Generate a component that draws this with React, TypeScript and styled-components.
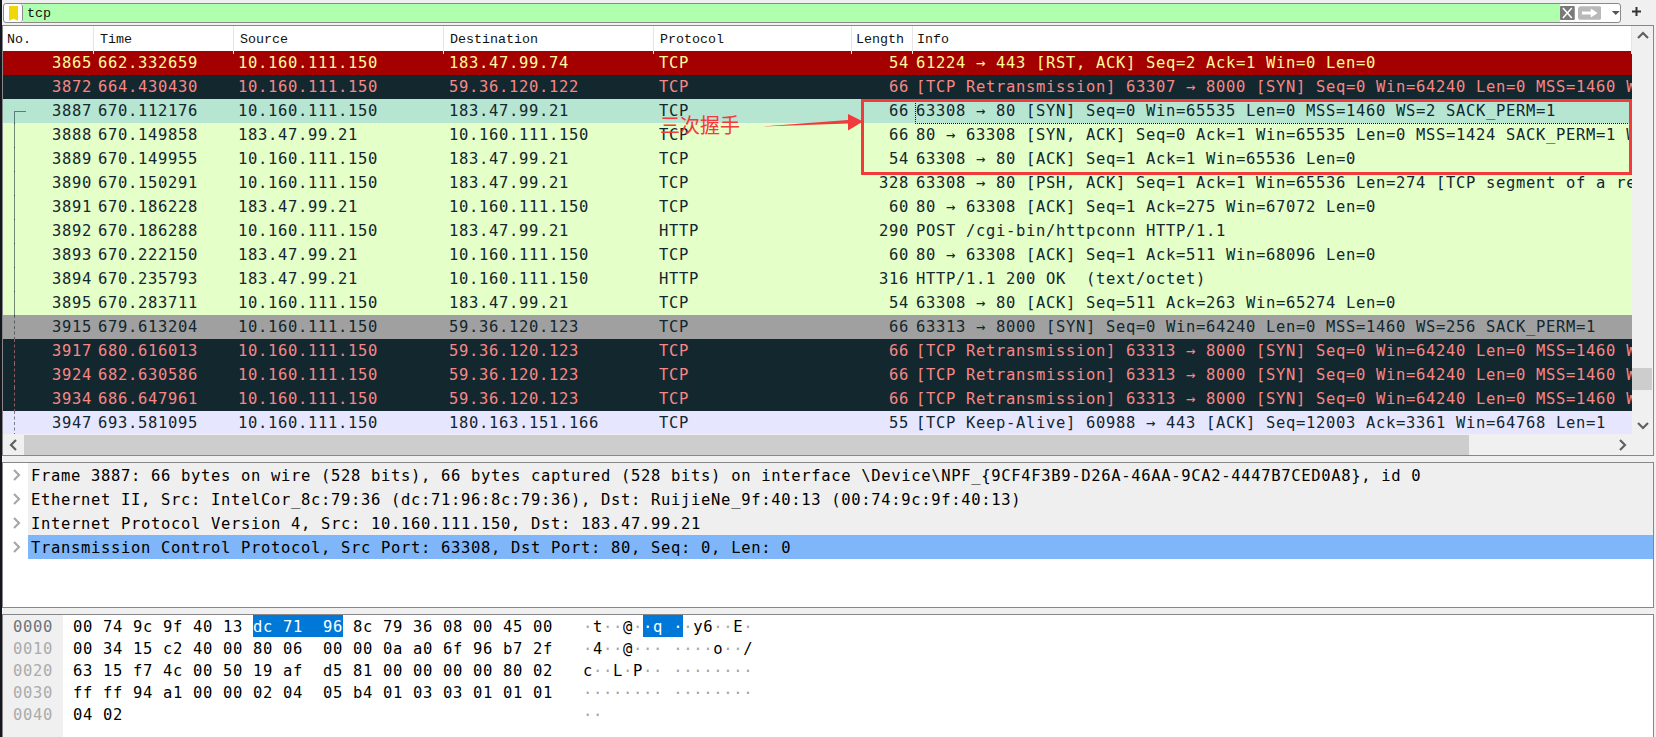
import React from 'react'
import styled, { createGlobalStyle } from 'styled-components'

type RowKind = 'rst' | 'bad' | 'current' | 'http' | 'syn' | 'tcp'
type Related = 'start' | 'solid' | 'dashed'

interface Packet {
  no: number
  time: string
  source: string
  destination: string
  protocol: string
  length: number
  info: string
  kind: RowKind
  related?: Related
}

const LOCAL = '10.160.111.150'
const SERVER = '183.47.99.21'
const RETRANS = '[TCP Retransmission] 63313 → 8000 [SYN] Seq=0 Win=64240 Len=0 MSS=1460 WS=256 SACK_PERM=1'

const packets: Packet[] = [
  { no: 3865, time: '662.332659', source: LOCAL, destination: '183.47.99.74', protocol: 'TCP', length: 54, info: '61224 → 443 [RST, ACK] Seq=2 Ack=1 Win=0 Len=0', kind: 'rst' },
  { no: 3872, time: '664.430430', source: LOCAL, destination: '59.36.120.122', protocol: 'TCP', length: 66, info: '[TCP Retransmission] 63307 → 8000 [SYN] Seq=0 Win=64240 Len=0 MSS=1460 WS=256 SACK_PERM=1', kind: 'bad' },
  { no: 3887, time: '670.112176', source: LOCAL, destination: SERVER, protocol: 'TCP', length: 66, info: '63308 → 80 [SYN] Seq=0 Win=65535 Len=0 MSS=1460 WS=2 SACK_PERM=1', kind: 'current', related: 'start' },
  { no: 3888, time: '670.149858', source: SERVER, destination: LOCAL, protocol: 'TCP', length: 66, info: '80 → 63308 [SYN, ACK] Seq=0 Ack=1 Win=65535 Len=0 MSS=1424 SACK_PERM=1 WS=512', kind: 'http', related: 'solid' },
  { no: 3889, time: '670.149955', source: LOCAL, destination: SERVER, protocol: 'TCP', length: 54, info: '63308 → 80 [ACK] Seq=1 Ack=1 Win=65536 Len=0', kind: 'http', related: 'solid' },
  { no: 3890, time: '670.150291', source: LOCAL, destination: SERVER, protocol: 'TCP', length: 328, info: '63308 → 80 [PSH, ACK] Seq=1 Ack=1 Win=65536 Len=274 [TCP segment of a reassembled PDU]', kind: 'http', related: 'solid' },
  { no: 3891, time: '670.186228', source: SERVER, destination: LOCAL, protocol: 'TCP', length: 60, info: '80 → 63308 [ACK] Seq=1 Ack=275 Win=67072 Len=0', kind: 'http', related: 'solid' },
  { no: 3892, time: '670.186288', source: LOCAL, destination: SERVER, protocol: 'HTTP', length: 290, info: 'POST /cgi-bin/httpconn HTTP/1.1', kind: 'http', related: 'solid' },
  { no: 3893, time: '670.222150', source: SERVER, destination: LOCAL, protocol: 'TCP', length: 60, info: '80 → 63308 [ACK] Seq=1 Ack=511 Win=68096 Len=0', kind: 'http', related: 'solid' },
  { no: 3894, time: '670.235793', source: SERVER, destination: LOCAL, protocol: 'HTTP', length: 316, info: 'HTTP/1.1 200 OK  (text/octet)', kind: 'http', related: 'solid' },
  { no: 3895, time: '670.283711', source: LOCAL, destination: SERVER, protocol: 'TCP', length: 54, info: '63308 → 80 [ACK] Seq=511 Ack=263 Win=65274 Len=0', kind: 'http', related: 'solid' },
  { no: 3915, time: '679.613204', source: LOCAL, destination: '59.36.120.123', protocol: 'TCP', length: 66, info: '63313 → 8000 [SYN] Seq=0 Win=64240 Len=0 MSS=1460 WS=256 SACK_PERM=1', kind: 'syn', related: 'dashed' },
  { no: 3917, time: '680.616013', source: LOCAL, destination: '59.36.120.123', protocol: 'TCP', length: 66, info: RETRANS, kind: 'bad', related: 'dashed' },
  { no: 3924, time: '682.630586', source: LOCAL, destination: '59.36.120.123', protocol: 'TCP', length: 66, info: RETRANS, kind: 'bad', related: 'dashed' },
  { no: 3934, time: '686.647961', source: LOCAL, destination: '59.36.120.123', protocol: 'TCP', length: 66, info: RETRANS, kind: 'bad', related: 'dashed' },
  { no: 3947, time: '693.581095', source: LOCAL, destination: '180.163.151.166', protocol: 'TCP', length: 55, info: '[TCP Keep-Alive] 60988 → 443 [ACK] Seq=12003 Ack=3361 Win=64768 Len=1', kind: 'tcp', related: 'dashed' }
]

const details = [
  'Frame 3887: 66 bytes on wire (528 bits), 66 bytes captured (528 bits) on interface \\Device\\NPF_{9CF4F3B9-D26A-46AA-9CA2-4447B7CED0A8}, id 0',
  'Ethernet II, Src: IntelCor_8c:79:36 (dc:71:96:8c:79:36), Dst: RuijieNe_9f:40:13 (00:74:9c:9f:40:13)',
  'Internet Protocol Version 4, Src: 10.160.111.150, Dst: 183.47.99.21',
  'Transmission Control Protocol, Src Port: 63308, Dst Port: 80, Seq: 0, Len: 0'
]

const hexRows = [
  { offset: '0000', hex: '00 74 9c 9f 40 13 dc 71  96 8c 79 36 08 00 45 00', ascii: '·t··@··q ··y6··E·' },
  { offset: '0010', hex: '00 34 15 c2 40 00 80 06  00 00 0a a0 6f 96 b7 2f', ascii: '·4··@··· ····o··/' },
  { offset: '0020', hex: '63 15 f7 4c 00 50 19 af  d5 81 00 00 00 00 80 02', ascii: 'c··L·P·· ········' },
  { offset: '0030', hex: 'ff ff 94 a1 00 00 02 04  05 b4 01 03 03 01 01 01', ascii: '········ ········' },
  { offset: '0040', hex: '04 02', ascii: '··' }
]

const rowColors: Record<RowKind, { bg: string; fg: string }> = {
  rst: { bg: '#a40000', fg: '#fffc9c' },
  bad: { bg: '#12272e', fg: '#f78787' },
  current: { bg: '#b6e5d1', fg: '#12272e' },
  http: { bg: '#e4ffc7', fg: '#12272e' },
  syn: { bg: '#a0a0a0', fg: '#12272e' },
  tcp: { bg: '#e7e6ff', fg: '#12272e' }
}

const COLUMNS = '91px 140px 210px 210px 198px 61px 719px'

const GlobalStyle = createGlobalStyle`
  html, body {
    margin: 0;
    background: #f0f0f0;
    overflow: hidden;
  }
`

const Shell = styled.div`
  position: relative;
  width: 1654px;
  height: 737px;
  display: flex;
  flex-direction: column;
  border-left: 2px solid #14181c;
  box-sizing: border-box;
  overflow: hidden;
  font-family: "DejaVu Sans Mono", monospace;
  font-size: 15.5px;
  letter-spacing: 0.67px;
`

const FilterBar = styled.div`
  height: 25px;
  display: flex;
  align-items: flex-start;
  padding: 3px 0 0 1px;
  box-sizing: border-box;
`

const FilterField = styled.div`
  width: 1618px;
  height: 20px;
  display: flex;
  border: 1px solid #8a8a8a;
  border-radius: 3px;
  box-sizing: border-box;
  overflow: hidden;
  background: #fff;
`

const BookmarkBox = styled.div`
  width: 18px;
  display: flex;
  align-items: center;
  justify-content: center;
  border-right: 1px solid #8a8a8a;
  border-radius: 0 3px 3px 0;
`

const FilterText = styled.div`
  flex: 1;
  padding-left: 4px;
  background: #afffaf;
  font-family: "Liberation Mono", monospace;
  font-size: 13.33px;
  letter-spacing: 0;
  line-height: 20px;
  color: #111;
`

const FilterButtons = styled.div`
  width: 60px;
  display: flex;
  align-items: center;
  gap: 3px;
`

const AddButton = styled.div`
  width: 30px;
  display: flex;
  justify-content: center;
  padding-top: 3px;
`

const Pane = styled.section<{ $height: number }>`
  height: ${p => p.$height}px;
  flex: none;
  border: 1px solid #86868b;
  box-sizing: border-box;
  background: #fff;
  overflow: hidden;
`

const PacketPane = styled(Pane)`
  display: grid;
  grid-template-columns: 1629px 21px;
  grid-template-rows: 408px 21px;
  background: #f0f0f0;
  margin-bottom: 6px;
`

const PacketList = styled.div`
  overflow: hidden;
  background: #fff;
`

const HeaderRow = styled.div`
  height: 25px;
  display: grid;
  grid-template-columns: ${COLUMNS};
  background: #fff;
  font-family: "Liberation Mono", monospace;
  font-size: 13.33px;
  letter-spacing: 0;
  line-height: 28px;
  color: #111;
`

const HeaderCell = styled.div<{ $first?: boolean }>`
  padding-left: ${p => (p.$first ? 4 : 6)}px;
  border-right: 1px solid #e5e5e5;
  white-space: nowrap;
`

const PacketRow = styled.div<{ $kind: RowKind }>`
  height: 24px;
  display: grid;
  grid-template-columns: ${COLUMNS};
  line-height: 25px;
  white-space: pre;
  background: ${p => rowColors[p.$kind].bg};
  color: ${p => rowColors[p.$kind].fg};
`

const Cell = styled.div<{ $pad?: number }>`
  padding-left: ${p => p.$pad ?? 4}px;
  overflow: hidden;
`

const NumberCell = styled.div<{ $pad: number }>`
  position: relative;
  text-align: right;
  padding-right: ${p => p.$pad}px;
`

const InfoCell = styled.div<{ $focused?: boolean }>`
  position: relative;
  padding-left: 3px;
  overflow: hidden;
  &::after {
    content: '';
    display: ${p => (p.$focused ? 'block' : 'none')};
    position: absolute;
    inset: 0 0 0 2px;
    border: 1px dotted #111;
    border-top-color: transparent;
    border-right-color: transparent;
  }
`

const RelatedLine = styled.span<{ $type: Related }>`
  position: absolute;
  left: 11px;
  top: ${p => (p.$type === 'start' ? '12px' : '0')};
  bottom: 0;
  width: ${p => (p.$type === 'start' ? '11px' : '0')};
  border-left: 1px ${p => (p.$type === 'dashed' ? 'dashed' : 'solid')} currentColor;
  border-top: ${p => (p.$type === 'start' ? '1px solid currentColor' : 'none')};
  opacity: 0.55;
`

const VerticalBar = styled.div`
  display: flex;
  flex-direction: column;
  align-items: center;
  justify-content: space-between;
  padding: 4px 0 3px;
  position: relative;
  background: #f0f0f0;
  box-sizing: border-box;
`

const VerticalThumb = styled.div`
  position: absolute;
  left: 0;
  right: 1px;
  top: 342px;
  height: 22px;
  background: #cdcdcd;
`

const HorizontalBar = styled.div`
  display: flex;
  align-items: center;
  height: 20px;
  margin-top: 1px;
  background: #f0f0f0;
`

const BarButton = styled.div`
  width: 21px;
  flex: none;
  display: flex;
  align-items: center;
  justify-content: center;
`

const HorizontalThumb = styled.div`
  width: 1445px;
  height: 100%;
  background: #cdcdcd;
`

const BarSpacer = styled.div`
  flex: 1;
`

const DetailPane = styled(Pane)`
  margin-bottom: 6px;
`

const DetailRow = styled.div`
  height: 24px;
  display: flex;
  line-height: 27px;
  white-space: pre;
  color: #000;
`

const DetailToggle = styled.div`
  width: 25px;
  flex: none;
  display: flex;
  align-items: center;
  justify-content: center;
`

const DetailLabel = styled.div<{ $selected: boolean }>`
  flex: 1;
  padding-left: 3px;
  background: ${p => (p.$selected ? '#7fb6f9' : '#efefef')};
`

const HexPane = styled(Pane)`
  flex: 1;
  display: flex;
  border-bottom: none;
`

const OffsetColumn = styled.div`
  width: 60px;
  flex: none;
  background: #f0f0f0;
  padding-left: 10px;
  box-sizing: border-box;
`

const HexColumn = styled.div`
  padding-left: 10px;
  width: 520px;
  flex: none;
  box-sizing: border-box;
`

const HexLine = styled.div`
  height: 22px;
  line-height: 25px;
  white-space: pre;
  color: #000;
`

const OffsetLine = styled(HexLine)<{ $active: boolean }>`
  color: ${p => (p.$active ? '#6f7378' : '#ababab')};
`

const Mark = styled.span`
  display: inline-block;
  vertical-align: top;
  height: 22px;
  background: #0078d7;
  color: #fff;
`

const Dot = styled.span<{ $light: boolean }>`
  color: ${p => (p.$light ? '#fff' : '#a5a5a5')};
`

const CallOutBox = styled.div`
  position: absolute;
  left: 859px;
  top: 99px;
  width: 771px;
  height: 76px;
  border: 3px solid #f23a3a;
  box-sizing: border-box;
  pointer-events: none;
`

const CallOutText = styled.div`
  position: absolute;
  left: 658px;
  top: 112px;
  font-family: "Noto Sans CJK SC", sans-serif;
  font-size: 20px;
  font-weight: 400;
  letter-spacing: 0;
  line-height: 26px;
  color: #f23a3a;
`

const CallOutArrow = styled.svg`
  position: absolute;
  left: 756px;
  top: 112px;
`

const Chevron = ({ dir, color = '#606060' }: { dir: 'up' | 'down' | 'left' | 'right'; color?: string }): JSX.Element => {
  const points = {
    up: '1,8 6,3 11,8',
    down: '1,4 6,9 11,4',
    left: '8,1 3,6 8,11',
    right: '4,1 9,6 4,11'
  }
  return (
    <svg width="12" height="12" viewBox="0 0 12 12">
      <polyline points={points[dir]} fill="none" stroke={color} strokeWidth="2.2" />
    </svg>
  )
}

const renderAscii = (text: string, light: boolean): React.ReactNode =>
  text.split('').map((ch, i) => (ch === '·' ? <Dot key={i} $light={light}>·</Dot> : ch))

const App = (): JSX.Element => {
  return (
    <Shell>
      <GlobalStyle />
      <FilterBar>
        <FilterField>
          <BookmarkBox>
            <svg width="9" height="15" viewBox="0 0 9 15">
              <path d="M0 0H9V15L4.5 12.5L0 15Z" fill="#f2d60c" />
            </svg>
          </BookmarkBox>
          <FilterText>tcp</FilterText>
          <FilterButtons>
            <svg width="15" height="14" viewBox="0 0 15 14">
              <rect width="15" height="14" rx="1" fill="#7a7a7a" />
              <path d="M3 2L12 12M12 2L3 12" stroke="#fff" strokeWidth="1.6" />
            </svg>
            <svg width="24" height="14" viewBox="0 0 24 14">
              <rect width="24" height="14" rx="3" fill="#b9b9b9" />
              <path d="M4 5.5H13V2.5L20 7L13 11.5V8.5H4Z" fill="#fff" />
            </svg>
            <svg width="16" height="14" viewBox="0 0 16 14">
              <path d="M8 5H16L12 9Z" fill="#555" />
            </svg>
          </FilterButtons>
        </FilterField>
        <AddButton>
          <svg width="11" height="11" viewBox="0 0 11 11">
            <path d="M5.5 1V10M1 5.5H10" stroke="#333" strokeWidth="2" />
          </svg>
        </AddButton>
      </FilterBar>

      <PacketPane $height={431}>
        <PacketList>
          <HeaderRow>
            <HeaderCell $first>No.</HeaderCell>
            <HeaderCell>Time</HeaderCell>
            <HeaderCell>Source</HeaderCell>
            <HeaderCell>Destination</HeaderCell>
            <HeaderCell>Protocol</HeaderCell>
            <HeaderCell $first>Length</HeaderCell>
            <HeaderCell $first>Info</HeaderCell>
          </HeaderRow>
          {packets.map(packet => (
            <PacketRow key={packet.no} $kind={packet.kind}>
              <NumberCell $pad={2}>
                {packet.related !== undefined && <RelatedLine $type={packet.related} />}
                {packet.no}
              </NumberCell>
              <Cell>{packet.time}</Cell>
              <Cell>{packet.source}</Cell>
              <Cell $pad={5}>{packet.destination}</Cell>
              <Cell $pad={5}>{packet.protocol}</Cell>
              <NumberCell $pad={4}>{packet.length}</NumberCell>
              <InfoCell $focused={packet.kind === 'current'}>{packet.info}</InfoCell>
            </PacketRow>
          ))}
        </PacketList>
        <VerticalBar>
          <Chevron dir="up" />
          <VerticalThumb />
          <Chevron dir="down" />
        </VerticalBar>
        <HorizontalBar>
          <BarButton><Chevron dir="left" /></BarButton>
          <HorizontalThumb />
          <BarSpacer />
          <BarButton><Chevron dir="right" /></BarButton>
        </HorizontalBar>
      </PacketPane>

      <DetailPane $height={146}>
        {details.map((line, i) => (
          <DetailRow key={line}>
            <DetailToggle><Chevron dir="right" color="#a8a8a8" /></DetailToggle>
            <DetailLabel $selected={i === 3}>{line}</DetailLabel>
          </DetailRow>
        ))}
      </DetailPane>

      <HexPane $height={123}>
        <OffsetColumn>
          {hexRows.map((row, i) => (
            <OffsetLine key={row.offset} $active={i === 0}>{row.offset}</OffsetLine>
          ))}
        </OffsetColumn>
        <HexColumn>
          {hexRows.map((row, i) => (
            <HexLine key={row.offset}>
              {i === 0
                ? <>{row.hex.slice(0, 18)}<Mark>{row.hex.slice(18, 27)}</Mark>{row.hex.slice(27)}</>
                : row.hex}
            </HexLine>
          ))}
        </HexColumn>
        <div>
          {hexRows.map((row, i) => (
            <HexLine key={row.offset}>
              {i === 0
                ? <>{renderAscii(row.ascii.slice(0, 6), false)}<Mark>{renderAscii(row.ascii.slice(6, 10), true)}</Mark>{renderAscii(row.ascii.slice(10), false)}</>
                : renderAscii(row.ascii, false)}
            </HexLine>
          ))}
        </div>
      </HexPane>

      <CallOutBox />
      <CallOutText>三次握手</CallOutText>
      <CallOutArrow width="108" height="22" viewBox="0 0 108 22">
        <path d="M3 14.5L90 8L90 2L105 9.5L90 18.5L90 11.5Z" fill="#f23a3a" />
      </CallOutArrow>
    </Shell>
  )
}

export default App
